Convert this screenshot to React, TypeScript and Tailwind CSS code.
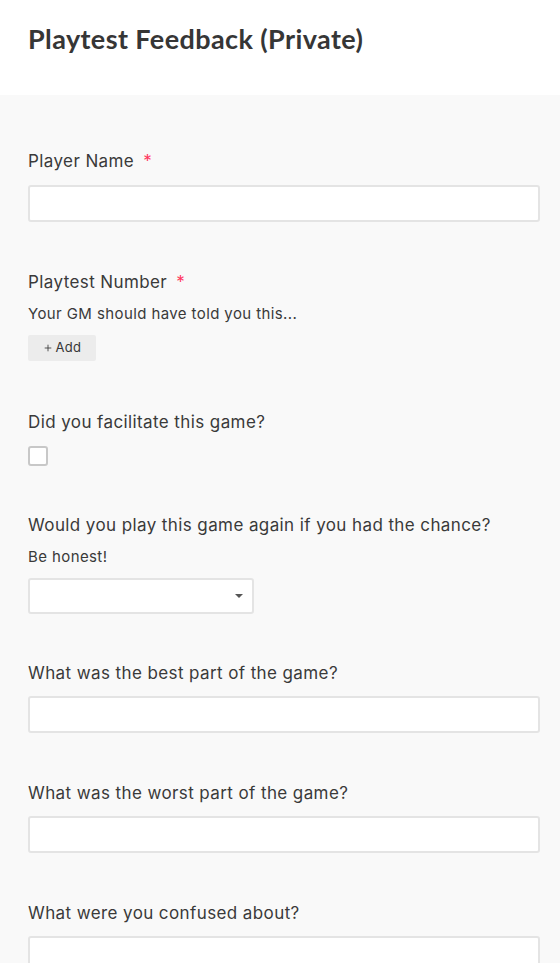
import { Plus } from "lucide-react";

function Label({ text, required }: { text: string; required?: boolean }) {
  return (
    <div className="h-[24px] leading-[24px] text-[17px] tracking-[0.4px] text-[#3a3a3a]">
      {text}
      {required && <span className="ml-[9px] text-[#ff3860]">*</span>}
    </div>
  );
}

function Help({ text }: { text: string }) {
  return (
    <div className="mt-[10px] h-[20px] leading-[20px] text-[15px] tracking-[0.4px] text-[#3a3a3a]">{text}</div>
  );
}

function TextInput({ top = "mt-[11px]" }: { top?: string }) {
  return (
    <input
      type="text"
      className={`${top} block h-[37px] w-full rounded-[3px] border-2 border-[#e4e4e4] bg-white px-2 text-[15px] outline-none`}
    />
  );
}

const TEXT_FIELDS = [
  "What was the best part of the game?",
  "What was the worst part of the game?",
  "What were you confused about?",
];

export default function App() {
  return (
    <div className="min-h-[963px] bg-[#f9f9f9] font-['Inter',sans-serif]">
      <header className="h-[95px] bg-white px-[28px] pt-[21px]">
        <h1 className="font-['Lato',sans-serif] text-[27px] font-bold leading-[36px] tracking-[0.4px] text-[#363636]">
          Playtest Feedback (Private)
        </h1>
      </header>

      <main className="flex flex-col pl-[28px] pr-[20px] pt-[54px]">
        <div className="mb-[48px]">
          <Label text="Player Name" required />
          <TextInput top="mt-[12px]" />
        </div>

        <div className="mb-[49px]">
          <Label text="Playtest Number" required />
          <Help text="Your GM should have told you this..." />
          <button className="mt-[11px] flex h-[26px] w-[68px] items-center justify-center gap-[3px] rounded-[2px] bg-[#ececec] text-[13px] tracking-[0.3px] text-[#363636]">
            <Plus size={10} strokeWidth={2} />
            Add
          </button>
        </div>

        <div className="mb-[47px]">
          <Label text="Did you facilitate this game?" />
          <div className="mt-[12px] h-[20px] w-[20px] rounded-[3px] border-2 border-[#c8c8c8] bg-white" />
        </div>

        <div className="mb-[47px]">
          <Label text="Would you play this game again if you had the chance?" />
          <Help text="Be honest!" />
          <div className="mt-[11px] flex h-[36px] w-[226px] items-center justify-end rounded-[3px] border-2 border-[#e4e4e4] bg-white pr-[9px]">
            <div className="h-0 w-0 border-x-[4px] border-t-[4px] border-x-transparent border-t-[#555]" />
          </div>
        </div>

        {TEXT_FIELDS.map((t) => (
          <div key={t} className="mb-[48px]">
            <Label text={t} />
            <TextInput />
          </div>
        ))}
      </main>
    </div>
  );
}
